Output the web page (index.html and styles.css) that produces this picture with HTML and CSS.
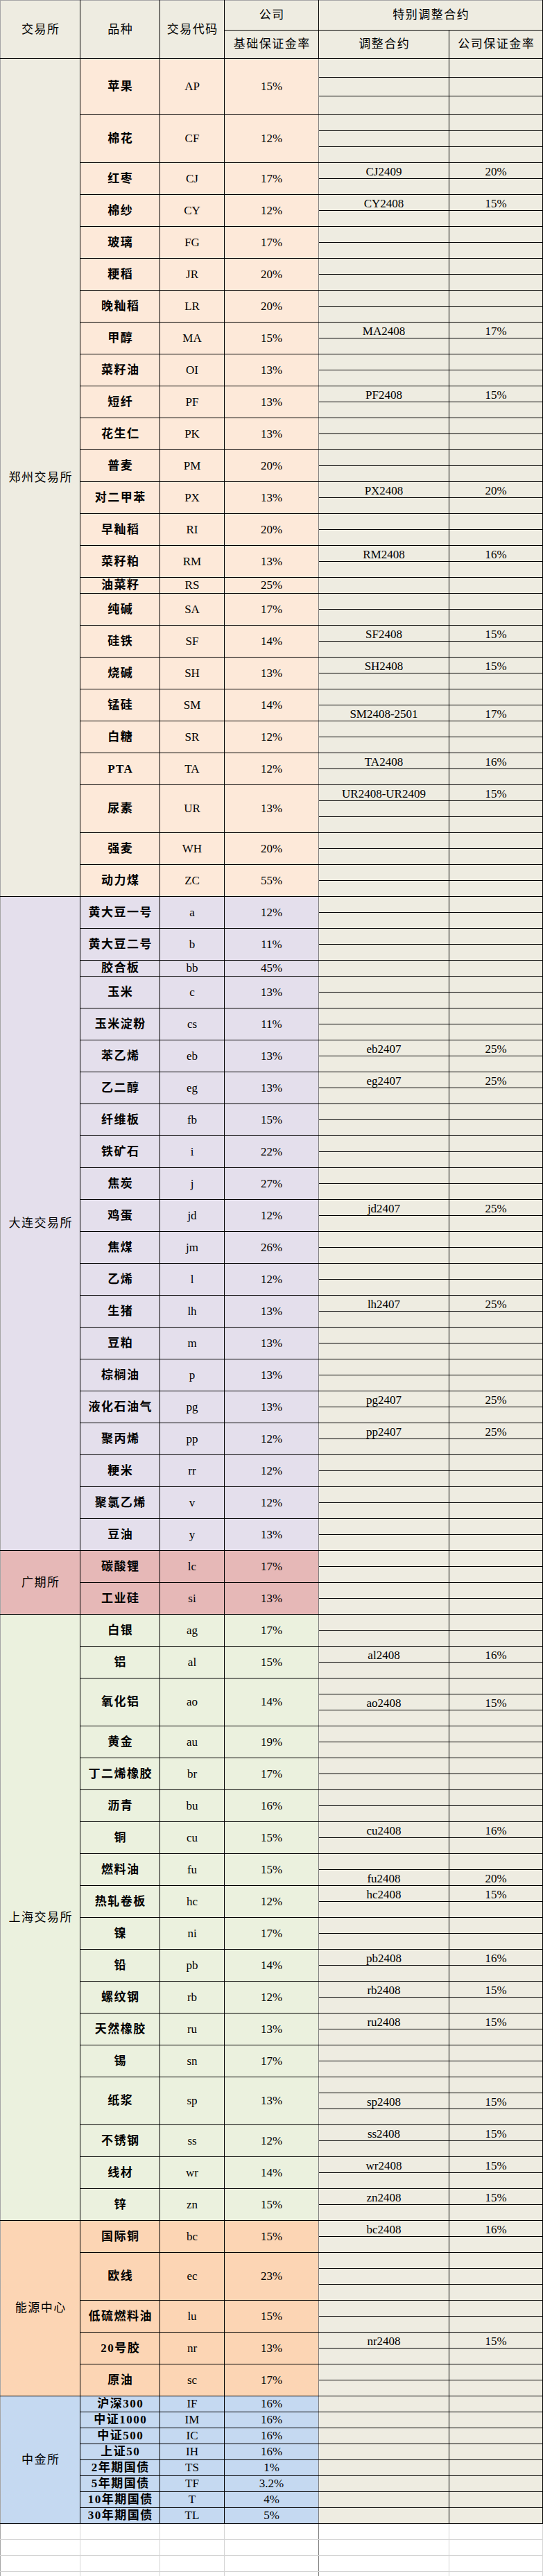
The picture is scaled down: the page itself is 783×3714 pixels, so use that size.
FILE: index.html
```html
<!DOCTYPE html>
<html lang="zh-CN">
<head>
<meta charset="utf-8">
<title>保证金率</title>
<link rel="stylesheet" href="styles.css">
</head>
<body>
<table class="sheet">
<colgroup><col class="w1"><col class="w2"><col class="w3"><col class="w4"><col class="w5"><col class="w6"></colgroup>
<thead>
<tr class="h1"><th class="x" rowspan="2">交易所</th><th rowspan="2">品种</th><th rowspan="2">交易代码</th><th class="hm">公司</th><th colspan="2">特别调整合约</th></tr>
<tr class="h2"><th class="hm">基础保证金率</th><th>调整合约</th><th>公司保证金率</th></tr>
</thead>
<tbody class="zz">
<tr class="t"><td class="x" rowspan="52">郑州交易所</td><td class="p" rowspan="3">苹果</td><td class="c" rowspan="3">AP</td><td class="m" rowspan="3">15%</td><td class="a"></td><td class="b"></td></tr>
<tr class="t"><td class="a"></td><td class="b"></td></tr>
<tr class="t"><td class="a"></td><td class="b"></td></tr>
<tr><td class="p" rowspan="3">棉花</td><td class="c" rowspan="3">CF</td><td class="m" rowspan="3">12%</td><td class="a"></td><td class="b"></td></tr>
<tr><td class="a"></td><td class="b"></td></tr>
<tr><td class="a"></td><td class="b"></td></tr>
<tr><td class="p" rowspan="2">红枣</td><td class="c" rowspan="2">CJ</td><td class="m" rowspan="2">17%</td><td class="a">CJ2409</td><td class="b">20%</td></tr>
<tr><td class="a"></td><td class="b"></td></tr>
<tr><td class="p" rowspan="2">棉纱</td><td class="c" rowspan="2">CY</td><td class="m" rowspan="2">12%</td><td class="a">CY2408</td><td class="b">15%</td></tr>
<tr><td class="a"></td><td class="b"></td></tr>
<tr><td class="p" rowspan="2">玻璃</td><td class="c" rowspan="2">FG</td><td class="m" rowspan="2">17%</td><td class="a"></td><td class="b"></td></tr>
<tr><td class="a"></td><td class="b"></td></tr>
<tr><td class="p" rowspan="2">粳稻</td><td class="c" rowspan="2">JR</td><td class="m" rowspan="2">20%</td><td class="a"></td><td class="b"></td></tr>
<tr><td class="a"></td><td class="b"></td></tr>
<tr><td class="p" rowspan="2">晚籼稻</td><td class="c" rowspan="2">LR</td><td class="m" rowspan="2">20%</td><td class="a"></td><td class="b"></td></tr>
<tr><td class="a"></td><td class="b"></td></tr>
<tr><td class="p" rowspan="2">甲醇</td><td class="c" rowspan="2">MA</td><td class="m" rowspan="2">15%</td><td class="a">MA2408</td><td class="b">17%</td></tr>
<tr><td class="a"></td><td class="b"></td></tr>
<tr><td class="p" rowspan="2">菜籽油</td><td class="c" rowspan="2">OI</td><td class="m" rowspan="2">13%</td><td class="a"></td><td class="b"></td></tr>
<tr><td class="a"></td><td class="b"></td></tr>
<tr><td class="p" rowspan="2">短纤</td><td class="c" rowspan="2">PF</td><td class="m" rowspan="2">13%</td><td class="a">PF2408</td><td class="b">15%</td></tr>
<tr><td class="a"></td><td class="b"></td></tr>
<tr><td class="p" rowspan="2">花生仁</td><td class="c" rowspan="2">PK</td><td class="m" rowspan="2">13%</td><td class="a"></td><td class="b"></td></tr>
<tr><td class="a"></td><td class="b"></td></tr>
<tr><td class="p" rowspan="2">普麦</td><td class="c" rowspan="2">PM</td><td class="m" rowspan="2">20%</td><td class="a"></td><td class="b"></td></tr>
<tr><td class="a"></td><td class="b"></td></tr>
<tr><td class="p" rowspan="2">对二甲苯</td><td class="c" rowspan="2">PX</td><td class="m" rowspan="2">13%</td><td class="a">PX2408</td><td class="b">20%</td></tr>
<tr><td class="a"></td><td class="b"></td></tr>
<tr><td class="p" rowspan="2">早籼稻</td><td class="c" rowspan="2">RI</td><td class="m" rowspan="2">20%</td><td class="a"></td><td class="b"></td></tr>
<tr><td class="a"></td><td class="b"></td></tr>
<tr><td class="p" rowspan="2">菜籽粕</td><td class="c" rowspan="2">RM</td><td class="m" rowspan="2">13%</td><td class="a">RM2408</td><td class="b">16%</td></tr>
<tr><td class="a"></td><td class="b"></td></tr>
<tr><td class="p">油菜籽</td><td class="c">RS</td><td class="m">25%</td><td class="a"></td><td class="b"></td></tr>
<tr><td class="p" rowspan="2">纯碱</td><td class="c" rowspan="2">SA</td><td class="m" rowspan="2">17%</td><td class="a"></td><td class="b"></td></tr>
<tr><td class="a"></td><td class="b"></td></tr>
<tr><td class="p" rowspan="2">硅铁</td><td class="c" rowspan="2">SF</td><td class="m" rowspan="2">14%</td><td class="a">SF2408</td><td class="b">15%</td></tr>
<tr><td class="a"></td><td class="b"></td></tr>
<tr><td class="p" rowspan="2">烧碱</td><td class="c" rowspan="2">SH</td><td class="m" rowspan="2">13%</td><td class="a">SH2408</td><td class="b">15%</td></tr>
<tr><td class="a"></td><td class="b"></td></tr>
<tr><td class="p" rowspan="2">锰硅</td><td class="c" rowspan="2">SM</td><td class="m" rowspan="2">14%</td><td class="a"></td><td class="b"></td></tr>
<tr><td class="a">SM2408-2501</td><td class="b">17%</td></tr>
<tr><td class="p" rowspan="2">白糖</td><td class="c" rowspan="2">SR</td><td class="m" rowspan="2">12%</td><td class="a"></td><td class="b"></td></tr>
<tr><td class="a"></td><td class="b"></td></tr>
<tr><td class="p" rowspan="2">PTA</td><td class="c" rowspan="2">TA</td><td class="m" rowspan="2">12%</td><td class="a">TA2408</td><td class="b">16%</td></tr>
<tr><td class="a"></td><td class="b"></td></tr>
<tr><td class="p" rowspan="3">尿素</td><td class="c" rowspan="3">UR</td><td class="m" rowspan="3">13%</td><td class="a">UR2408-UR2409</td><td class="b">15%</td></tr>
<tr><td class="a"></td><td class="b"></td></tr>
<tr><td class="a"></td><td class="b"></td></tr>
<tr><td class="p" rowspan="2">强麦</td><td class="c" rowspan="2">WH</td><td class="m" rowspan="2">20%</td><td class="a"></td><td class="b"></td></tr>
<tr><td class="a"></td><td class="b"></td></tr>
<tr><td class="p" rowspan="2">动力煤</td><td class="c" rowspan="2">ZC</td><td class="m" rowspan="2">55%</td><td class="a"></td><td class="b"></td></tr>
<tr><td class="a"></td><td class="b"></td></tr>
</tbody>
<tbody class="dl">
<tr><td class="x" rowspan="41">大连交易所</td><td class="p" rowspan="2">黄大豆一号</td><td class="c" rowspan="2">a</td><td class="m" rowspan="2">12%</td><td class="a"></td><td class="b"></td></tr>
<tr><td class="a"></td><td class="b"></td></tr>
<tr><td class="p" rowspan="2">黄大豆二号</td><td class="c" rowspan="2">b</td><td class="m" rowspan="2">11%</td><td class="a"></td><td class="b"></td></tr>
<tr><td class="a"></td><td class="b"></td></tr>
<tr><td class="p">胶合板</td><td class="c">bb</td><td class="m">45%</td><td class="a"></td><td class="b"></td></tr>
<tr><td class="p" rowspan="2">玉米</td><td class="c" rowspan="2">c</td><td class="m" rowspan="2">13%</td><td class="a"></td><td class="b"></td></tr>
<tr><td class="a"></td><td class="b"></td></tr>
<tr><td class="p" rowspan="2">玉米淀粉</td><td class="c" rowspan="2">cs</td><td class="m" rowspan="2">11%</td><td class="a"></td><td class="b"></td></tr>
<tr><td class="a"></td><td class="b"></td></tr>
<tr><td class="p" rowspan="2">苯乙烯</td><td class="c" rowspan="2">eb</td><td class="m" rowspan="2">13%</td><td class="a">eb2407</td><td class="b">25%</td></tr>
<tr><td class="a"></td><td class="b"></td></tr>
<tr><td class="p" rowspan="2">乙二醇</td><td class="c" rowspan="2">eg</td><td class="m" rowspan="2">13%</td><td class="a">eg2407</td><td class="b">25%</td></tr>
<tr><td class="a"></td><td class="b"></td></tr>
<tr><td class="p" rowspan="2">纤维板</td><td class="c" rowspan="2">fb</td><td class="m" rowspan="2">15%</td><td class="a"></td><td class="b"></td></tr>
<tr><td class="a"></td><td class="b"></td></tr>
<tr><td class="p" rowspan="2">铁矿石</td><td class="c" rowspan="2">i</td><td class="m" rowspan="2">22%</td><td class="a"></td><td class="b"></td></tr>
<tr><td class="a"></td><td class="b"></td></tr>
<tr><td class="p" rowspan="2">焦炭</td><td class="c" rowspan="2">j</td><td class="m" rowspan="2">27%</td><td class="a"></td><td class="b"></td></tr>
<tr><td class="a"></td><td class="b"></td></tr>
<tr><td class="p" rowspan="2">鸡蛋</td><td class="c" rowspan="2">jd</td><td class="m" rowspan="2">12%</td><td class="a">jd2407</td><td class="b">25%</td></tr>
<tr><td class="a"></td><td class="b"></td></tr>
<tr><td class="p" rowspan="2">焦煤</td><td class="c" rowspan="2">jm</td><td class="m" rowspan="2">26%</td><td class="a"></td><td class="b"></td></tr>
<tr><td class="a"></td><td class="b"></td></tr>
<tr><td class="p" rowspan="2">乙烯</td><td class="c" rowspan="2">l</td><td class="m" rowspan="2">12%</td><td class="a"></td><td class="b"></td></tr>
<tr><td class="a"></td><td class="b"></td></tr>
<tr><td class="p" rowspan="2">生猪</td><td class="c" rowspan="2">lh</td><td class="m" rowspan="2">13%</td><td class="a">lh2407</td><td class="b">25%</td></tr>
<tr><td class="a"></td><td class="b"></td></tr>
<tr><td class="p" rowspan="2">豆粕</td><td class="c" rowspan="2">m</td><td class="m" rowspan="2">13%</td><td class="a"></td><td class="b"></td></tr>
<tr><td class="a"></td><td class="b"></td></tr>
<tr><td class="p" rowspan="2">棕榈油</td><td class="c" rowspan="2">p</td><td class="m" rowspan="2">13%</td><td class="a"></td><td class="b"></td></tr>
<tr><td class="a"></td><td class="b"></td></tr>
<tr><td class="p" rowspan="2">液化石油气</td><td class="c" rowspan="2">pg</td><td class="m" rowspan="2">13%</td><td class="a">pg2407</td><td class="b">25%</td></tr>
<tr><td class="a"></td><td class="b"></td></tr>
<tr><td class="p" rowspan="2">聚丙烯</td><td class="c" rowspan="2">pp</td><td class="m" rowspan="2">12%</td><td class="a">pp2407</td><td class="b">25%</td></tr>
<tr><td class="a"></td><td class="b"></td></tr>
<tr><td class="p" rowspan="2">粳米</td><td class="c" rowspan="2">rr</td><td class="m" rowspan="2">12%</td><td class="a"></td><td class="b"></td></tr>
<tr><td class="a"></td><td class="b"></td></tr>
<tr><td class="p" rowspan="2">聚氯乙烯</td><td class="c" rowspan="2">v</td><td class="m" rowspan="2">12%</td><td class="a"></td><td class="b"></td></tr>
<tr><td class="a"></td><td class="b"></td></tr>
<tr><td class="p" rowspan="2">豆油</td><td class="c" rowspan="2">y</td><td class="m" rowspan="2">13%</td><td class="a"></td><td class="b"></td></tr>
<tr><td class="a"></td><td class="b"></td></tr>
</tbody>
<tbody class="gz">
<tr><td class="x" rowspan="4">广期所</td><td class="p" rowspan="2">碳酸锂</td><td class="c" rowspan="2">lc</td><td class="m" rowspan="2">17%</td><td class="a"></td><td class="b"></td></tr>
<tr><td class="a"></td><td class="b"></td></tr>
<tr><td class="p" rowspan="2">工业硅</td><td class="c" rowspan="2">si</td><td class="m" rowspan="2">13%</td><td class="a"></td><td class="b"></td></tr>
<tr><td class="a"></td><td class="b"></td></tr>
</tbody>
<tbody class="sh">
<tr><td class="x" rowspan="38">上海交易所</td><td class="p" rowspan="2">白银</td><td class="c" rowspan="2">ag</td><td class="m" rowspan="2">17%</td><td class="a"></td><td class="b"></td></tr>
<tr><td class="a"></td><td class="b"></td></tr>
<tr><td class="p" rowspan="2">铝</td><td class="c" rowspan="2">al</td><td class="m" rowspan="2">15%</td><td class="a">al2408</td><td class="b">16%</td></tr>
<tr><td class="a"></td><td class="b"></td></tr>
<tr><td class="p" rowspan="3">氧化铝</td><td class="c" rowspan="3">ao</td><td class="m" rowspan="3">14%</td><td class="a"></td><td class="b"></td></tr>
<tr><td class="a">ao2408</td><td class="b">15%</td></tr>
<tr><td class="a"></td><td class="b"></td></tr>
<tr><td class="p" rowspan="2">黄金</td><td class="c" rowspan="2">au</td><td class="m" rowspan="2">19%</td><td class="a"></td><td class="b"></td></tr>
<tr><td class="a"></td><td class="b"></td></tr>
<tr><td class="p" rowspan="2">丁二烯橡胶</td><td class="c" rowspan="2">br</td><td class="m" rowspan="2">17%</td><td class="a"></td><td class="b"></td></tr>
<tr><td class="a"></td><td class="b"></td></tr>
<tr><td class="p" rowspan="2">沥青</td><td class="c" rowspan="2">bu</td><td class="m" rowspan="2">16%</td><td class="a"></td><td class="b"></td></tr>
<tr><td class="a"></td><td class="b"></td></tr>
<tr><td class="p" rowspan="2">铜</td><td class="c" rowspan="2">cu</td><td class="m" rowspan="2">15%</td><td class="a">cu2408</td><td class="b">16%</td></tr>
<tr><td class="a"></td><td class="b"></td></tr>
<tr><td class="p" rowspan="2">燃料油</td><td class="c" rowspan="2">fu</td><td class="m" rowspan="2">15%</td><td class="a"></td><td class="b"></td></tr>
<tr><td class="a">fu2408</td><td class="b">20%</td></tr>
<tr><td class="p" rowspan="2">热轧卷板</td><td class="c" rowspan="2">hc</td><td class="m" rowspan="2">12%</td><td class="a">hc2408</td><td class="b">15%</td></tr>
<tr><td class="a"></td><td class="b"></td></tr>
<tr><td class="p" rowspan="2">镍</td><td class="c" rowspan="2">ni</td><td class="m" rowspan="2">17%</td><td class="a"></td><td class="b"></td></tr>
<tr><td class="a"></td><td class="b"></td></tr>
<tr><td class="p" rowspan="2">铅</td><td class="c" rowspan="2">pb</td><td class="m" rowspan="2">14%</td><td class="a">pb2408</td><td class="b">16%</td></tr>
<tr><td class="a"></td><td class="b"></td></tr>
<tr><td class="p" rowspan="2">螺纹钢</td><td class="c" rowspan="2">rb</td><td class="m" rowspan="2">12%</td><td class="a">rb2408</td><td class="b">15%</td></tr>
<tr><td class="a"></td><td class="b"></td></tr>
<tr><td class="p" rowspan="2">天然橡胶</td><td class="c" rowspan="2">ru</td><td class="m" rowspan="2">13%</td><td class="a">ru2408</td><td class="b">15%</td></tr>
<tr><td class="a"></td><td class="b"></td></tr>
<tr><td class="p" rowspan="2">锡</td><td class="c" rowspan="2">sn</td><td class="m" rowspan="2">17%</td><td class="a"></td><td class="b"></td></tr>
<tr><td class="a"></td><td class="b"></td></tr>
<tr><td class="p" rowspan="3">纸浆</td><td class="c" rowspan="3">sp</td><td class="m" rowspan="3">13%</td><td class="a"></td><td class="b"></td></tr>
<tr><td class="a">sp2408</td><td class="b">15%</td></tr>
<tr><td class="a"></td><td class="b"></td></tr>
<tr><td class="p" rowspan="2">不锈钢</td><td class="c" rowspan="2">ss</td><td class="m" rowspan="2">12%</td><td class="a">ss2408</td><td class="b">15%</td></tr>
<tr><td class="a"></td><td class="b"></td></tr>
<tr><td class="p" rowspan="2">线材</td><td class="c" rowspan="2">wr</td><td class="m" rowspan="2">14%</td><td class="a">wr2408</td><td class="b">15%</td></tr>
<tr><td class="a"></td><td class="b"></td></tr>
<tr><td class="p" rowspan="2">锌</td><td class="c" rowspan="2">zn</td><td class="m" rowspan="2">15%</td><td class="a">zn2408</td><td class="b">15%</td></tr>
<tr><td class="a"></td><td class="b"></td></tr>
</tbody>
<tbody class="ine">
<tr><td class="x" rowspan="11">能源中心</td><td class="p" rowspan="2">国际铜</td><td class="c" rowspan="2">bc</td><td class="m" rowspan="2">15%</td><td class="a">bc2408</td><td class="b">16%</td></tr>
<tr><td class="a"></td><td class="b"></td></tr>
<tr><td class="p" rowspan="3">欧线</td><td class="c" rowspan="3">ec</td><td class="m" rowspan="3">23%</td><td class="a"></td><td class="b"></td></tr>
<tr><td class="a"></td><td class="b"></td></tr>
<tr><td class="a"></td><td class="b"></td></tr>
<tr><td class="p" rowspan="2">低硫燃料油</td><td class="c" rowspan="2">lu</td><td class="m" rowspan="2">15%</td><td class="a"></td><td class="b"></td></tr>
<tr><td class="a"></td><td class="b"></td></tr>
<tr><td class="p" rowspan="2">20号胶</td><td class="c" rowspan="2">nr</td><td class="m" rowspan="2">13%</td><td class="a">nr2408</td><td class="b">15%</td></tr>
<tr><td class="a"></td><td class="b"></td></tr>
<tr><td class="p" rowspan="2">原油</td><td class="c" rowspan="2">sc</td><td class="m" rowspan="2">17%</td><td class="a"></td><td class="b"></td></tr>
<tr><td class="a"></td><td class="b"></td></tr>
</tbody>
<tbody class="cf">
<tr><td class="x" rowspan="8">中金所</td><td class="p">沪深300</td><td class="c">IF</td><td class="m">16%</td><td class="a"></td><td class="b"></td></tr>
<tr><td class="p">中证1000</td><td class="c">IM</td><td class="m">16%</td><td class="a"></td><td class="b"></td></tr>
<tr><td class="p">中证500</td><td class="c">IC</td><td class="m">16%</td><td class="a"></td><td class="b"></td></tr>
<tr><td class="p">上证50</td><td class="c">IH</td><td class="m">16%</td><td class="a"></td><td class="b"></td></tr>
<tr><td class="p">2年期国债</td><td class="c">TS</td><td class="m">1%</td><td class="a"></td><td class="b"></td></tr>
<tr><td class="p">5年期国债</td><td class="c">TF</td><td class="m">3.2%</td><td class="a"></td><td class="b"></td></tr>
<tr><td class="p">10年期国债</td><td class="c">T</td><td class="m">4%</td><td class="a"></td><td class="b"></td></tr>
<tr><td class="p">30年期国债</td><td class="c">TL</td><td class="m">5%</td><td class="a"></td><td class="b"></td></tr>
</tbody>
<tbody class="blank">
<tr><td></td><td></td><td></td><td class="k4"></td><td></td><td></td></tr>
<tr><td></td><td></td><td></td><td class="k4"></td><td></td><td></td></tr>
<tr><td></td><td></td><td></td><td class="k4"></td><td></td><td></td></tr>
<tr><td></td><td></td><td></td><td class="k4"></td><td></td><td></td></tr>
</tbody>
</table>
</body>
</html>
```

FILE: styles.css
```css
html, body {
  margin: 0;
  padding: 0;
  background: #ffffff;
}

body {
  font-family: "Liberation Serif", "Noto Sans CJK SC", serif;
  font-size: 17px;
  color: #000;
}

.sheet {
  border-collapse: collapse;
  table-layout: fixed;
  width: 782px;
}

.w1 { width: 115px; }
.w2 { width: 115px; }
.w3 { width: 93px; }
.w4 { width: 136px; }
.w5 { width: 188px; }
.w6 { width: 135px; }

.sheet th,
.sheet td {
  padding: 0;
  border: 1px solid #000;
  text-align: center;
  vertical-align: middle;
  white-space: nowrap;
  overflow: hidden;
  line-height: 20px;
}

.sheet th {
  font-weight: normal;
  background: #eeece1;
  letter-spacing: 1.5px;
  padding-left: 1.5px;
  border-top-color: #a6a6a6;
}

.sheet tr { height: 23px; }
.sheet tr.t { height: 27px; }
.sheet tr.h1 { height: 43px; }
.sheet tr.h2 { height: 41px; }
.sheet tr.h2 th { border-top-color: #000; }

.sheet .x {
  border-left-color: #a6a6a6;
  letter-spacing: 1.5px;
  padding-left: 1.5px;
}

.sheet .p {
  font-weight: bold;
  letter-spacing: 1.5px;
  padding-left: 1.5px;
}

.sheet .m { border-right-color: #7f7f7f; }

.sheet .a,
.sheet .b {
  background: #eeece1;
  vertical-align: bottom;
  line-height: 19px;
}

.sheet .a { border-left-color: #7f7f7f; }

/* exchange colour groups */
.zz .x { background: #eeece1; }
.zz .p, .zz .c, .zz .m { background: #fde9d9; }

.dl .x, .dl .p, .dl .c, .dl .m { background: #e4dfec; }

.gz .x, .gz .p, .gz .c, .gz .m { background: #e6b8b7; }

.sh .x, .sh .p, .sh .c, .sh .m { background: #ebf1de; }

.ine .x, .ine .p, .ine .c, .ine .m { background: #fcd5b4; }

.cf .x, .cf .p, .cf .c, .cf .m { background: #c5d9f1; }

/* empty grid below the table */
.blank td {
  background: #ffffff;
  border-color: #d4d4d4;
}
.blank td:first-child { border-left-color: #a6a6a6; }
.blank td.k4 { border-right-color: #7f7f7f; }
```
